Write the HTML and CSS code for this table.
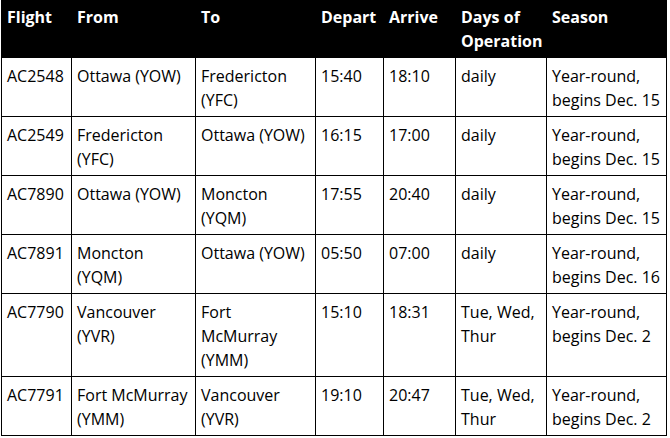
FILE: index.html
```html
<!DOCTYPE html>
<html>
<head>
<meta charset="utf-8">
<link rel="stylesheet" href="styles.css">
</head>
<body>
<table class="flights">
  <thead>
    <tr><th class="c-flight">Flight</th><th class="c-from">From</th><th class="c-to">To</th><th class="c-dep">Depart</th><th class="c-arr">Arrive</th><th class="c-days">Days of Operation</th><th class="c-season">Season</th></tr>
  </thead>
  <tbody>
    <tr><td>AC2548</td><td>Ottawa (YOW)</td><td>Fredericton (YFC)</td><td>15:40</td><td>18:10</td><td>daily</td><td>Year-round, begins Dec. 15</td></tr>
    <tr><td>AC2549</td><td>Fredericton (YFC)</td><td>Ottawa (YOW)</td><td>16:15</td><td>17:00</td><td>daily</td><td>Year-round, begins Dec. 15</td></tr>
    <tr><td>AC7890</td><td>Ottawa (YOW)</td><td>Moncton (YQM)</td><td>17:55</td><td>20:40</td><td>daily</td><td>Year-round, begins Dec. 15</td></tr>
    <tr><td>AC7891</td><td>Moncton (YQM)</td><td>Ottawa (YOW)</td><td>05:50</td><td>07:00</td><td>daily</td><td>Year-round, begins Dec. 16</td></tr>
    <tr><td>AC7790</td><td>Vancouver (YVR)</td><td>Fort McMurray (YMM)</td><td>15:10</td><td>18:31</td><td>Tue, Wed, Thur</td><td>Year-round, begins Dec. 2</td></tr>
    <tr><td>AC7791</td><td>Fort McMurray (YMM)</td><td>Vancouver (YVR)</td><td>19:10</td><td>20:47</td><td>Tue, Wed, Thur</td><td>Year-round, begins Dec. 2</td></tr>
  </tbody>
</table>
</body>
</html>
```

FILE: styles.css
```css
html, body {
  margin: 0;
  padding: 0;
  background: #fff;
}
body {
  font-family: "Open Sans", "DejaVu Sans", sans-serif;
  font-size: 16px;
  line-height: 24px;
  color: #000;
}
.flights {
  border-collapse: separate;
  border-spacing: 0;
  table-layout: fixed;
  width: 666px;
  margin-left: 1px;
  border-left: 1px solid #000;
}
.flights th,
.flights td {
  box-sizing: border-box;
  text-align: left;
  vertical-align: top;
}
.flights th {
  background: #000;
  color: #fff;
  font-weight: 700;
  padding: 5px 3px 5px 5px;
}
.flights td {
  padding: 6px 6px 4px 5px;
  border-right: 1px solid #000;
  border-bottom: 1px solid #000;
}
.c-flight { width: 70px; }
.c-from { width: 124px; }
.c-to { width: 120px; }
.c-dep { width: 68px; }
.c-arr { width: 72px; }
.c-days { width: 91px; }
.c-season { width: 120px; }
```
